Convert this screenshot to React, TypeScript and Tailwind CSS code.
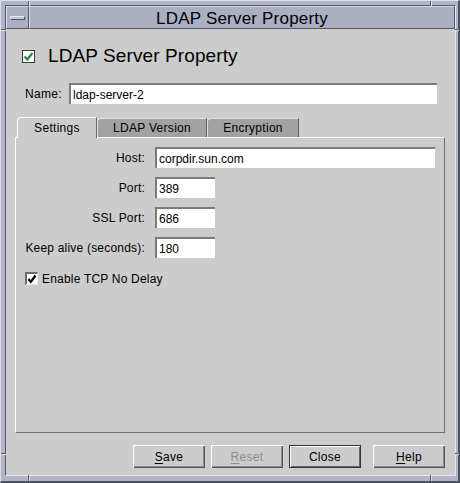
import React from "react";

const FONT = { fontFamily: '"Liberation Sans", Arial, sans-serif' };

function Tick({ className }: { className: string }) {
  return <div className={"absolute " + className} />;
}

function Field({ w, value }: { w: string; value: string }) {
  return (
    <div
      className={
        "h-[21px] bg-white border-t-2 border-l-2 border-t-[#7a7a7a] border-l-[#7a7a7a] flex items-center pl-[2px] text-[12px] text-black " +
        w
      }
    >
      {value}
    </div>
  );
}

function Row({ label, w, value }: { label: string; w: string; value: string }) {
  return (
    <div className="flex items-center h-[21px]">
      <div className="w-[120px] text-right text-[12px] text-black tracking-[0.2px]">{label}</div>
      <div className="ml-[10px]">
        <Field w={w} value={value} />
      </div>
    </div>
  );
}

function Btn({
  children,
  def,
  disabled,
  className,
}: {
  children: React.ReactNode;
  def?: boolean;
  disabled?: boolean;
  className?: string;
}) {
  return (
    <div
      className={
        "w-[72px] h-[23px] flex items-center justify-center text-[12px] bg-[#cccccc] tracking-[0.3px] " +
        (def
          ? "border border-[#333333] shadow-[inset_1px_1px_0_#ffffff,inset_-1px_-1px_0_#666666] "
          : "shadow-[inset_1px_1px_0_#ffffff,inset_-1px_-1px_0_#555555,inset_-2px_-2px_0_#8a8a8a] ") +
        (disabled ? "text-[#8c8c8c] " : "text-black ") +
        (className || "")
      }
    >
      {children}
    </div>
  );
}

export default function App() {
  return (
    <div
      className="relative w-[460px] h-[483px] bg-[#b2b5c7] border-t border-l border-r-2 border-b-2 border-t-[#dcdee8] border-l-[#dcdee8] border-r-[#4f5263] border-b-[#4f5263] pt-[4px] pl-[4px] pr-[2px] pb-[5px]"
      style={FONT}
    >
      {/* resize ticks */}
      <Tick className="left-[27px] top-0 w-[1px] h-[5px] bg-[#55586a]" />
      <Tick className="left-[28px] top-0 w-[1px] h-[5px] bg-[#dcdee8]" />
      <Tick className="left-0 top-[28px] w-[5px] h-[1px] bg-[#55586a]" />
      <Tick className="left-0 top-[29px] w-[5px] h-[1px] bg-[#dcdee8]" />
      <Tick className="left-0 top-[452px] w-[5px] h-[1px] bg-[#55586a]" />
      <Tick className="left-0 top-[453px] w-[5px] h-[1px] bg-[#dcdee8]" />
      <Tick className="left-[27px] top-[474px] w-[1px] h-[6px] bg-[#55586a]" />
      <Tick className="left-[28px] top-[474px] w-[1px] h-[6px] bg-[#dcdee8]" />
      <Tick className="left-[429px] top-0 w-[1px] h-[5px] bg-[#55586a]" />
      <Tick className="left-[430px] top-0 w-[1px] h-[5px] bg-[#dcdee8]" />
      <Tick className="left-[429px] top-[474px] w-[1px] h-[6px] bg-[#55586a]" />
      <Tick className="left-[430px] top-[474px] w-[1px] h-[6px] bg-[#dcdee8]" />
      <Tick className="left-[454px] top-[28px] w-[4px] h-[1px] bg-[#55586a]" />
      <Tick className="left-[454px] top-[29px] w-[4px] h-[1px] bg-[#dcdee8]" />
      <Tick className="left-[454px] top-[452px] w-[4px] h-[1px] bg-[#55586a]" />
      <Tick className="left-[454px] top-[453px] w-[4px] h-[1px] bg-[#dcdee8]" />

      <div className="flex flex-col w-full h-full border-t border-l border-r border-b border-t-[#55586a] border-l-[#55586a] border-r-[#e6e7ee] border-b-[#e6e7ee]">
        {/* title bar */}
        <div className="flex h-[23px] bg-[#abafc2]">
          <div className="w-[23px] h-full border-t border-l border-r border-b border-t-[#d8dae4] border-l-[#d8dae4] border-r-[#55586a] border-b-[#55586a] flex items-center justify-center">
            <div className="w-[15px] h-[4px] bg-[#c3c6d4] border-t border-l border-r border-b border-t-[#e4e5ee] border-l-[#e4e5ee] border-r-[#4f5263] border-b-[#4f5263]" />
          </div>
          <div className="flex-1 h-full border-t border-l border-r border-b border-t-[#d8dae4] border-l-[#d8dae4] border-r-[#55586a] border-b-[#55586a] flex items-center justify-center text-[17px] text-black leading-none pt-[1px] tracking-[0.2px]">
            LDAP Server Property
          </div>
        </div>

        {/* content */}
        <div className="flex-1 bg-[#cccccc] flex flex-col">
          {/* heading */}
          <div className="mt-[20px] ml-[16px] h-[14px] flex items-center">
            <div className="w-[13px] h-[13px] bg-white border border-[#3a3a3a] flex items-center justify-center">
              <svg width="11" height="11" viewBox="0 0 11 11">
                <path d="M1.5 5.5 L4.3 8.5 L9.5 2" fill="none" stroke="#1f8a45" strokeWidth="2.2" />
              </svg>
            </div>
            <div className="ml-[13px] text-[19px] leading-[14px] text-black tracking-[0.1px]">
              LDAP Server Property
            </div>
          </div>

          {/* name row */}
          <div className="mt-[20px] ml-[19px] h-[21px] flex items-center">
            <div className="w-[44px] text-[12px] text-black tracking-[0.3px]">Name:</div>
            <Field w="w-[368px]" value="ldap-server-2" />
          </div>

          {/* tabs */}
          <div className="mt-[13px] ml-[11px] h-[21px] -mb-px relative z-10 flex items-end">
            <div className="w-[80px] h-[21px] bg-[#cccccc] border-t border-l border-r border-t-white border-l-white border-r-[#6a6a6a] rounded-tl-[4px] flex items-center justify-center text-[12px] text-black pb-[1px] tracking-[0.3px]">
              Settings
            </div>
            <div className="w-[110px] h-[19px] mb-px bg-[#a2a2a2] border-t border-l border-r border-t-[#e0e0e0] border-l-[#e0e0e0] border-r-[#5e5e5e] rounded-tl-[4px] flex items-center justify-center text-[12px] text-black tracking-[0.3px]">
              LDAP Version
            </div>
            <div className="w-[92px] h-[19px] mb-px bg-[#a2a2a2] border-t border-l border-r border-t-[#e0e0e0] border-l-[#e0e0e0] border-r-[#5e5e5e] rounded-tl-[4px] flex items-center justify-center text-[12px] text-black tracking-[0.3px]">
              Encryption
            </div>
          </div>

          {/* panel */}
          <div className="ml-[9px] w-[430px] h-[296px] border-t border-l border-r border-b border-t-white border-l-white border-r-[#6e6e6e] border-b-[#6e6e6e] pt-[9px] pl-[9px] flex flex-col">
            <Row label="Host:" w="w-[280px]" value="corpdir.sun.com" />
            <div className="mt-[9px]">
              <Row label="Port:" w="w-[60px]" value="389" />
            </div>
            <div className="mt-[9px]">
              <Row label="SSL Port:" w="w-[60px]" value="686" />
            </div>
            <div className="mt-[9px]">
              <Row label="Keep alive (seconds):" w="w-[60px]" value="180" />
            </div>
            <div className="mt-[14px] h-[13px] flex items-center">
              <div className="w-[13px] h-[13px] bg-white border-t-2 border-l-2 border-r border-b border-t-[#6a6a6a] border-l-[#6a6a6a] border-r-[#e8e8e8] border-b-[#e8e8e8] flex items-center justify-center">
                <svg width="10" height="10" viewBox="0 0 10 10">
                  <path d="M1.5 5 L3.8 8 L8.5 1.5" fill="none" stroke="#000000" strokeWidth="2.2" />
                </svg>
              </div>
              <div className="ml-[4px] text-[12px] text-black tracking-[0.2px]">Enable TCP No Delay</div>
            </div>
          </div>

          {/* buttons */}
          <div className="mt-[12px] ml-[127px] flex">
            <Btn>
              <span className="underline underline-offset-2">S</span>ave
            </Btn>
            <Btn disabled className="ml-[6px]">
              <span className="underline underline-offset-2">R</span>eset
            </Btn>
            <Btn def className="ml-[6px]">
              Close
            </Btn>
            <Btn className="ml-[12px]">
              <span className="underline underline-offset-2">H</span>elp
            </Btn>
          </div>
        </div>
      </div>
    </div>
  );
}
